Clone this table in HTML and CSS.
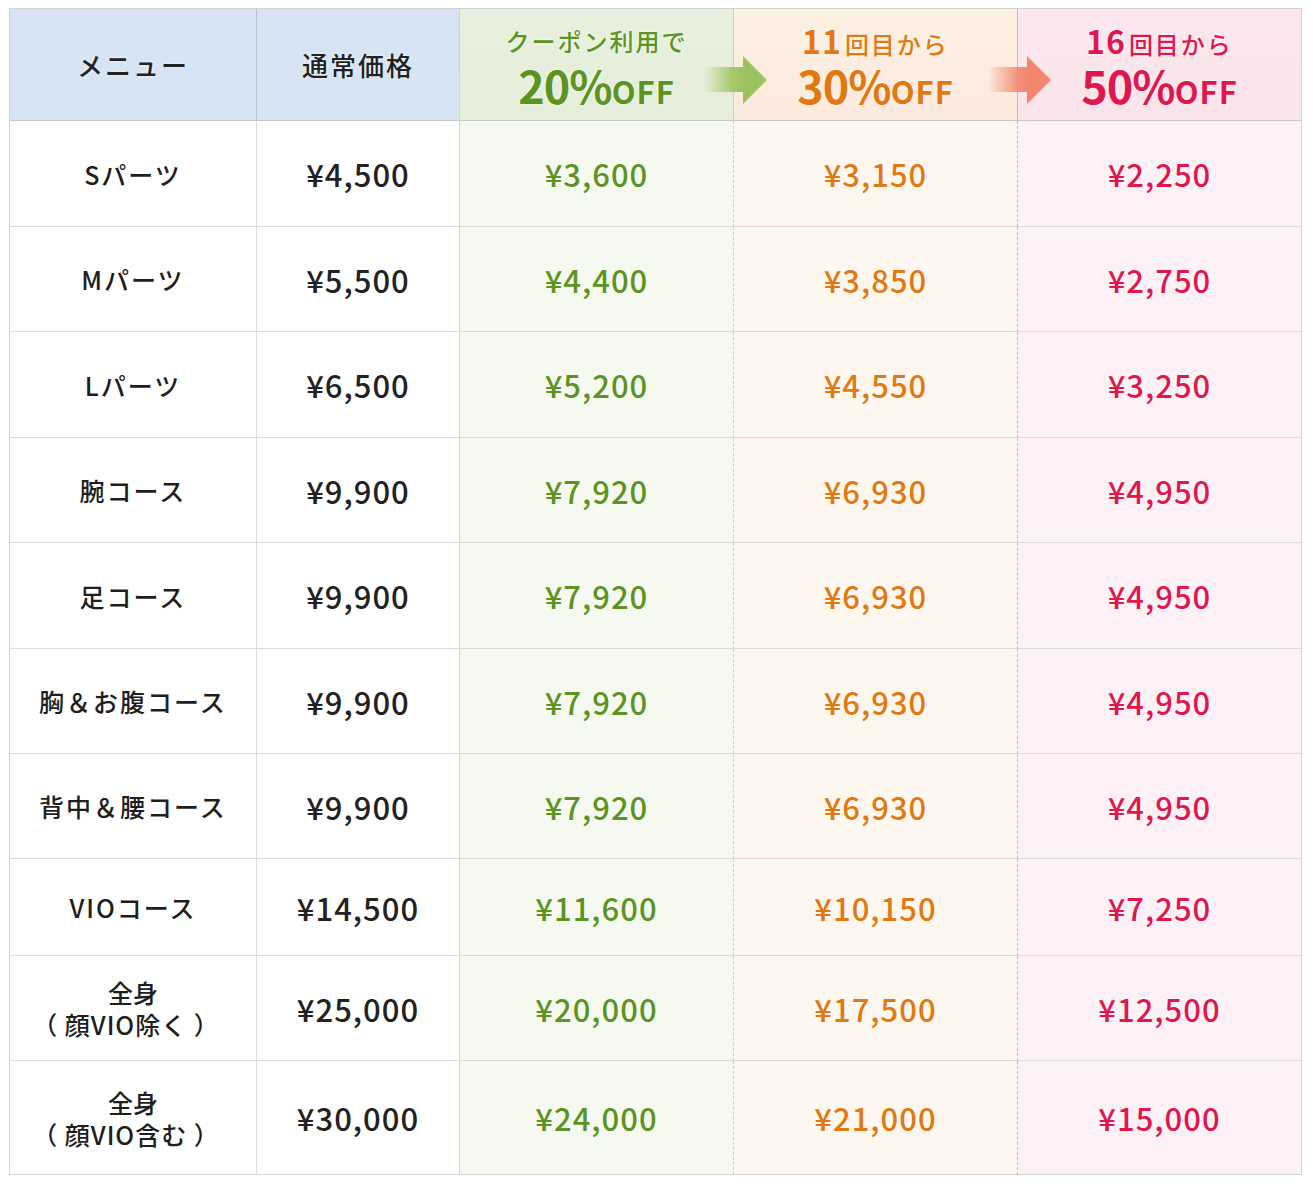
FILE: index.html
```html
<!DOCTYPE html>
<html lang="ja">
<head>
<meta charset="utf-8">
<link rel="stylesheet" href="styles.css">
</head>
<body>
<div class="wrap">
  <div class="table">
    <div class="cell h h-blue"><span class="hlabel">メニュー</span></div>
    <div class="cell h h-blue"><span class="hlabel">通常価格</span></div>
    <div class="cell h hc h-green c-green">
      <div class="hsub">クーポン利用で</div>
      <div class="hbig"><span class="pct">20%</span><span class="off">OFF</span></div>
    </div>
    <div class="cell h hc h-orange c-orange">
      <div class="hsub"><span class="num">11</span>回目から</div>
      <div class="hbig"><span class="pct">30%</span><span class="off">OFF</span></div>
    </div>
    <div class="cell h hc h-pink c-pink last">
      <div class="hsub"><span class="num">16</span>回目から</div>
      <div class="hbig"><span class="pct">50%</span><span class="off">OFF</span></div>
    </div>

    <div class="cell name">Sパーツ</div><div class="cell price">¥4,500</div><div class="cell p b-green">¥3,600</div><div class="cell p b-orange">¥3,150</div><div class="cell p b-pink last">¥2,250</div>
    <div class="cell name">Mパーツ</div><div class="cell price">¥5,500</div><div class="cell p b-green">¥4,400</div><div class="cell p b-orange">¥3,850</div><div class="cell p b-pink last">¥2,750</div>
    <div class="cell name">Lパーツ</div><div class="cell price">¥6,500</div><div class="cell p b-green">¥5,200</div><div class="cell p b-orange">¥4,550</div><div class="cell p b-pink last">¥3,250</div>
    <div class="cell name">腕コース</div><div class="cell price">¥9,900</div><div class="cell p b-green">¥7,920</div><div class="cell p b-orange">¥6,930</div><div class="cell p b-pink last">¥4,950</div>
    <div class="cell name">足コース</div><div class="cell price">¥9,900</div><div class="cell p b-green">¥7,920</div><div class="cell p b-orange">¥6,930</div><div class="cell p b-pink last">¥4,950</div>
    <div class="cell name">胸＆お腹コース</div><div class="cell price">¥9,900</div><div class="cell p b-green">¥7,920</div><div class="cell p b-orange">¥6,930</div><div class="cell p b-pink last">¥4,950</div>
    <div class="cell name">背中＆腰コース</div><div class="cell price">¥9,900</div><div class="cell p b-green">¥7,920</div><div class="cell p b-orange">¥6,930</div><div class="cell p b-pink last">¥4,950</div>
    <div class="cell name">VIOコース</div><div class="cell price">¥14,500</div><div class="cell p b-green">¥11,600</div><div class="cell p b-orange">¥10,150</div><div class="cell p b-pink last">¥7,250</div>
    <div class="cell name two"><span>全身</span><span class="sub">（&nbsp;顔VIO除く&nbsp;）</span></div><div class="cell price">¥25,000</div><div class="cell p b-green">¥20,000</div><div class="cell p b-orange">¥17,500</div><div class="cell p b-pink last">¥12,500</div>
    <div class="cell name two bottom"><span>全身</span><span class="sub">（&nbsp;顔VIO含む&nbsp;）</span></div><div class="cell price bottom">¥30,000</div><div class="cell p b-green bottom">¥24,000</div><div class="cell p b-orange bottom">¥21,000</div><div class="cell p b-pink last bottom">¥15,000</div>

    <svg class="arrow arrow-green" viewBox="0 0 63 48" width="63" height="48" aria-hidden="true">
      <defs>
        <linearGradient id="gg" x1="0" x2="1" y1="0" y2="0">
          <stop offset="0" stop-color="#9cc35e" stop-opacity="0"/>
          <stop offset="0.7" stop-color="#9cc35e" stop-opacity="0.85"/>
          <stop offset="1" stop-color="#9cc35e"/>
        </linearGradient>
      </defs>
      <rect x="0" y="11" width="40" height="25" fill="url(#gg)"/>
      <polygon points="39,0 63,24 39,48" fill="#9cc35e"/>
    </svg>
    <svg class="arrow arrow-pink" viewBox="0 0 63 48" width="63" height="48" aria-hidden="true">
      <defs>
        <linearGradient id="pg" x1="0" x2="1" y1="0" y2="0">
          <stop offset="0" stop-color="#f2876e" stop-opacity="0"/>
          <stop offset="0.7" stop-color="#f2876e" stop-opacity="0.85"/>
          <stop offset="1" stop-color="#f2876e"/>
        </linearGradient>
      </defs>
      <rect x="0" y="11" width="40" height="25" fill="url(#pg)"/>
      <polygon points="39,0 63,24 39,48" fill="#f2876e"/>
    </svg>
  </div>
</div>
</body>
</html>
```
FILE: styles.css
```css
html, body {
  margin: 0;
  padding: 0;
  background: #ffffff;
}
body {
  font-family: "Noto Sans CJK JP", "Noto Sans", sans-serif;
  color: #222222;
}
.wrap {
  padding: 8px 0 0 9px;
}
.table {
  position: relative;
  width: 1291px;
  display: grid;
  grid-template-columns: 247px 203px 274px 284px 283px;
  grid-template-rows: 112px 106px 105px 106px 105px 106px 105px 105px 97px 105px 114px;
  border: 1px solid #d3d3d3;
  border-bottom: 0;
  box-sizing: content-box;
}
.cell {
  display: flex;
  align-items: center;
  justify-content: center;
  border-right: 1px solid #dcdcdc;
  border-bottom: 1px solid #dcdcdc;
  box-sizing: border-box;
  text-align: center;
  text-shadow: 0 0 3px rgba(255,255,255,0.9);
}
.cell.bottom {
  border-bottom-color: #d3d3d3;
}
.cell.last {
  border-right: 0;
}
.h {
  flex-direction: column;
  border-bottom-color: #c8c8c8;
}
.hc {
  padding-top: 4px;
}
.h-blue {
  background: #d6e4f3;
  border-right-color: #b9c3cc;
}
.h-blue + .h-blue {
  border-right-color: #c9d8c0;
}
.hlabel {
  font-size: 26px;
  font-weight: 500;
  letter-spacing: 2px;
  color: #222;
}
.h-green {
  background: linear-gradient(180deg, #e8f1de 0%, #e4eeda 100%);
  border-right: 1px solid #c6d9ab;
}
.h-orange {
  background: linear-gradient(180deg, #fdf1e4 0%, #fce9dd 100%);
  border-right: 1px solid #f3a794;
}
.h-pink {
  background: linear-gradient(180deg, #fbe8ee 0%, #fae3e9 100%);
}
.c-green { color: #5b9420; }
.c-orange { color: #e2780f; }
.c-pink { color: #e0174f; }
.hsub {
  font-size: 24px;
  font-weight: 500;
  letter-spacing: 2px;
  line-height: 34px;
  height: 34px;
}
.hsub .num {
  font-size: 32px;
  line-height: 1;
  font-weight: 700;
  letter-spacing: 1px;
  margin-right: 3px;
}
.hbig {
  line-height: 48px;
  height: 48px;
  margin-top: 4px;
}
.pct {
  font-size: 45px;
  line-height: 1;
  font-weight: 700;
  letter-spacing: -1px;
}
.off {
  font-size: 31px;
  line-height: 1;
  font-weight: 700;
  letter-spacing: 1px;
}
.name {
  font-size: 25px;
  font-weight: 500;
  letter-spacing: 2px;
  color: #1e1e1e;
}
.name.two {
  flex-direction: column;
  line-height: 32px;
  letter-spacing: 0;
}
.name .sub {
  letter-spacing: 1px;
  margin-left: -14px;
}
.price {
  font-size: 31px;
  font-weight: 500;
  letter-spacing: 1px;
  color: #222;
  border-right-color: #cfdcc3;
}
.p {
  font-size: 31px;
  font-weight: 500;
  letter-spacing: 1px;
}
.b-green {
  background: #f5f9f0;
  color: #5b9420;
  border-right: 1px dashed #c8dab0;
}
.b-orange {
  background: #fef7ef;
  color: #e2780f;
  border-right: 1px dashed #f3a99a;
}
.b-pink {
  background: #fdf1f5;
  color: #e0174f;
}
.arrow {
  position: absolute;
  top: 47px;
}
.arrow-green {
  left: 694px;
}
.arrow-pink {
  left: 978px;
}
```
